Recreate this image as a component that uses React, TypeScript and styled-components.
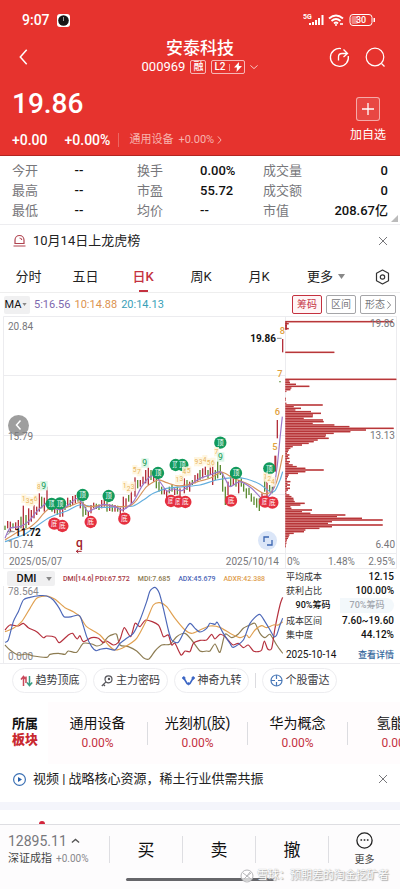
import React from "react";
import styled, { createGlobalStyle } from "styled-components";

const RED = "#e6332e";
const CRIMSON = "#c4313f";
const PAGE_W = 400;

const GlobalStyle = createGlobalStyle`
  * { box-sizing: border-box; }
  body {
    margin: 0;
    background: #fff;
    color: #111;
    font-family: Roboto, "Noto Sans CJK SC", sans-serif;
    font-size: 13px;
    line-height: 20px;
    overflow-x: hidden;
  }
  button, select { font: inherit; color: inherit; border: 0; background: none; padding: 0; margin: 0; }
  a { color: inherit; text-decoration: none; }
  h1, dl, dd, dt, p { margin: 0; font-weight: inherit; }
  svg { display: block; flex: none; }
`;

const Page = styled.main`
  display: flex;
  flex-direction: column;
  min-height: 100vh;
  overflow: hidden;
`;

/* ---------- header ---------- */
const Header = styled.header`
  background: ${RED};
  color: #fff;
  border-bottom: 1px solid #b32420;
`;
const StatusBar = styled.div`
  display: flex;
  justify-content: space-between;
  align-items: center;
  height: 36px;
  padding: 4px 24px 0 22px;
`;
const Clock = styled.span`
  display: flex;
  align-items: center;
  gap: 7px;
  font-size: 14px;
  font-weight: 500;
`;
const StatusIcons = styled.span`
  display: flex;
  align-items: center;
  gap: 5px;
`;
const NavBar = styled.nav`
  display: grid;
  grid-template-columns: 1fr auto 1fr;
  align-items: center;
  height: 42px;
  padding: 0 14px;
`;
const NavActions = styled.div`
  display: flex;
  justify-content: flex-end;
  gap: 15px;
`;
const IconButton = styled.button`
  display: flex;
  align-items: center;
  cursor: pointer;
`;
const BackButton = styled(IconButton)`
  padding-left: 5px;
`;
const Title = styled.div`
  display: flex;
  flex-direction: column;
  align-items: center;
  h1 { font-size: 17px; line-height: 20px; font-weight: 500; }
`;
const CodeLine = styled.div`
  display: flex;
  align-items: center;
  gap: 5px;
  font-size: 13px;
  line-height: 18px;
`;
const Tag = styled.span`
  display: flex;
  align-items: center;
  gap: 4px;
  height: 14px;
  padding: 0 2px;
  border: 1px solid rgba(255, 255, 255, 0.65);
  border-radius: 2px;
  font-size: 10px;
  line-height: 12px;
  font-weight: 500;
`;
const TagRule = styled.i`
  width: 1px;
  height: 7px;
  background: rgba(255, 255, 255, 0.5);
`;
const PriceBlock = styled.div`
  display: flex;
  justify-content: space-between;
  padding: 10px 14px 0 12px;
  height: 77px;
`;
const Price = styled.div`
  font-size: 28px;
  line-height: 32px;
  font-weight: 500;
`;
const ChangeLine = styled.div`
  display: flex;
  align-items: center;
  margin-top: 10px;
  font-size: 14px;
  font-weight: 500;
  gap: 17px;
`;
const SectorLink = styled.a`
  display: flex;
  align-items: center;
  gap: 5px;
  height: 14px;
  margin-left: -9px;
  padding-left: 10px;
  border-left: 1px solid rgba(255, 255, 255, 0.25);
  color: #f7b3ae;
  font-size: 11px;
  font-weight: 400;
  svg { margin-left: -2px; }
`;
const AddWatch = styled.button`
  display: flex;
  flex-direction: column;
  align-items: center;
  align-self: flex-start;
  gap: 4px;
  margin-top: 9px;
  font-size: 12px;
  line-height: 20px;
`;
const AddBox = styled.span`
  display: flex;
  align-items: center;
  justify-content: center;
  width: 24px;
  height: 24px;
  border: 1px solid rgba(255, 255, 255, 0.55);
  border-radius: 3px;
  background: rgba(255, 255, 255, 0.1);
`;

/* ---------- quotes ---------- */
const Quotes = styled.dl`
  position: relative;
  display: grid;
  grid-template-columns: 125fr 126fr 125fr;
  padding: 5px 12px 3px;
  border-bottom: 1px solid #ededf0;
`;
const Quote = styled.div<{ $end?: boolean }>`
  display: flex;
  justify-content: ${(p) => (p.$end ? "space-between" : "flex-start")};
  line-height: 20px;
  dt { width: ${(p) => (p.$end ? "auto" : "50%")}; color: #77777b; }
  dd { font-weight: 500; }
`;
const Corner = styled.i`
  position: absolute;
  right: 2px;
  bottom: 2px;
  border-left: 7px solid transparent;
  border-bottom: 7px solid #bbb;
`;
const Notice = styled.div<{ $h: number; $bottom?: number }>`
  display: flex;
  align-items: center;
  gap: 7px;
  height: ${(p) => p.$h}px;
  padding: 0 12px ${(p) => p.$bottom ?? 0}px 13px;
  color: #222;
  button { margin-left: auto; }
`;

/* ---------- tabs ---------- */
const Tabs = styled.nav`
  display: grid;
  grid-template-columns: 57fr 57fr 58fr 58fr 58fr 76fr 36fr;
  height: 37px;
  border-bottom: 1px solid #eee;
`;
const Tab = styled.button<{ $active?: boolean }>`
  display: flex;
  align-items: center;
  justify-content: center;
  gap: 5px;
  padding-top: 5px;
  font-size: 13px;
  color: ${(p) => (p.$active ? CRIMSON : "#222")};
  font-weight: ${(p) => (p.$active ? 500 : 400)};
  background: linear-gradient(${CRIMSON}, ${CRIMSON}) no-repeat center bottom / ${(p) => (p.$active ? "9px 2px" : "0 0")};
`;
const MaRow = styled.div`
  display: flex;
  align-items: center;
  gap: 4px;
  height: 23px;
  padding: 0 4px;
  font-size: 11px;
`;
const Picker = styled.div<{ $w: number; $h: number }>`
  display: flex;
  align-items: center;
  width: ${(p) => p.$w}px;
  height: ${(p) => p.$h}px;
  padding-right: 3px;
  background: #f0f0f1;
  border-radius: 2px;
  select {
    appearance: none;
    flex: 1;
    min-width: 0;
    font-size: 11px;
    line-height: 14px;
    text-align: center;
    text-align-last: center;
  }
`;
const Colored = styled.span<{ $c: string }>`
  color: ${(p) => p.$c};
  white-space: nowrap;
`;
const MaButtons = styled.div`
  display: flex;
  gap: 4px;
  margin-left: auto;
`;
const MaButton = styled.button<{ $active?: boolean }>`
  display: flex;
  align-items: center;
  gap: 2px;
  height: 19px;
  padding: 0 4px;
  border: 1px solid ${(p) => (p.$active ? CRIMSON : "#a5a5a8")};
  border-radius: 2px;
  color: ${(p) => (p.$active ? CRIMSON : "#77777b")};
  background: ${(p) => (p.$active ? "#fff5f6" : "#fff")};
  font-size: 10px;
  line-height: 16px;
`;

/* ---------- charts ---------- */
const ChartArea = styled.section`
  position: relative;
  svg.plot { width: 100%; height: auto; }
`;
const FloatButton = styled.button<{ $x: number; $y: number; $d: number; $bg: string }>`
  position: absolute;
  left: ${(p) => p.$x}%;
  top: ${(p) => p.$y}%;
  width: ${(p) => p.$d}px;
  height: ${(p) => p.$d}px;
  display: flex;
  align-items: center;
  justify-content: center;
  border-radius: 50%;
  background: ${(p) => p.$bg};
`;
const Indicator = styled.section`
  display: grid;
  grid-template-columns: 284fr 116fr;
  border-bottom: 1px solid #ececef;
`;
const DmiPanel = styled.div`
  svg.plot { width: 100%; height: auto; }
`;
const DmiHead = styled.div`
  display: flex;
  align-items: center;
  gap: 8px;
  padding: 2px 0 0 7px;
  height: 17px;
  font-size: 7px;
  line-height: 10px;
  font-weight: 500;
`;
const Stats = styled.div`
  display: flex;
  flex-direction: column;
  padding: 1px 6px 0 2px;
  font-size: 10px;
`;
const StatRow = styled.div<{ $top?: number }>`
  display: flex;
  justify-content: space-between;
  align-items: center;
  height: 14px;
  margin-top: ${(p) => p.$top ?? 0}px;
  line-height: 14px;
  small { font-size: 9px; color: #333; }
  b { font-weight: 500; }
  a { color: #35679c; font-size: 9px; font-weight: 500; }
`;
const Segments = styled.div`
  display: grid;
  grid-template-columns: 1fr 1fr;
  height: 15px;
  button { line-height: 15px; font-size: 9px; font-weight: 500; }
  button + button { color: #a3a7ae; background: #f3f8fb; border-radius: 0 8px 8px 0; }
`;

/* ---------- tools & sectors ---------- */
const Tools = styled.div`
  display: flex;
  align-items: center;
  gap: 6px;
  height: 33px;
  padding: 0 12px;
`;
const Pill = styled.button`
  display: flex;
  align-items: center;
  justify-content: center;
  gap: 3px;
  width: 75px;
  height: 25px;
  border: 1px solid #ededf0;
  border-radius: 13px;
  color: #3b3b3f;
  font-size: 11px;
  white-space: nowrap;
`;
const Rule = styled.i<{ $h: number }>`
  width: 1px;
  height: ${(p) => p.$h}px;
  background: #dcdce0;
`;
const Sectors = styled.section`
  display: flex;
  height: 62px;
  margin-top: 5px;
  overflow: hidden;
`;
const SectorLabel = styled.div`
  flex: none;
  width: 48px;
  padding: 14px 0 0 12px;
  font-size: 13px;
  line-height: 16px;
  font-weight: 700;
  b { display: block; color: #c92a30; }
`;
const SectorTile = styled.a`
  display: flex;
  align-items: center;
  flex: none;
  width: 100px;
  background: #fffcfd;
  white-space: nowrap;
`;
const TileText = styled.span`
  flex: 1;
  display: flex;
  flex-direction: column;
  align-items: center;
  font-size: 14px;
  line-height: 20px;
  span { color: ${CRIMSON}; font-size: 12px; }
`;
const Band = styled.div`
  height: 8px;
  background: #f4f5fb;
`;
const Peek = styled.div`
  height: 14px;
  margin-top: auto;
  padding-left: 39px;
  overflow: hidden;
  i { display: block; width: 6px; height: 6px; margin-top: 11px; border-radius: 50%; background: #d3253c; }
`;

/* ---------- bottom ---------- */
const Footer = styled.footer`
  position: relative;
  border-top: 1px solid #dedee2;
  background: #fdfcfd;
  height: 65px;
`;
const TradeBar = styled.div`
  display: grid;
  grid-template-columns: 109fr 73fr 73fr 73fr 72fr;
  align-items: center;
  height: 49px;
`;
const IndexBox = styled.button`
  padding: 0 0 0 8px;
  text-align: left;
  color: #77777b;
  font-size: 14px;
  line-height: 18px;
  span { display: flex; align-items: center; gap: 4px; }
  span + span { font-size: 11px; color: #444; line-height: 17px; }
  small { font-size: 10px; color: #88888c; }
`;
const TradeButton = styled.button`
  height: 27px;
  border-left: 1px solid #dedee2;
  font-size: 17px;
  line-height: 26px;
`;
const MoreButton = styled.button`
  display: flex;
  align-items: center;
  height: 27px;
  border-left: 1px solid #dedee2;
  justify-content: center;
  font-size: 10px;
  line-height: 16px;
  color: #444;
  span { display: flex; flex-direction: column; align-items: center; gap: 3px; }
`;
const HomeBar = styled.div`
  width: 37%;
  height: 3px;
  margin: 4px auto 0;
  border-radius: 2px;
  background: #66666a;
`;
const Watermark = styled.div`
  position: absolute;
  right: 11px;
  bottom: 4px;
  display: flex;
  align-items: center;
  gap: 3px;
  color: #fff;
  font-size: 11px;
  line-height: 18px;
  text-shadow: 0 0 1px #999, 1px 1px 1px #aaa;
`;

/* ---------- icons ---------- */
type ChevronProps = { dir: "left" | "right" | "up" | "down"; w: number; h: number; color: string; sw?: number };
const chevronPaths = {
  left: "M9 1 1 10l8 9",
  right: "M1 1l8 9-8 9",
  up: "M1 9l9-8 9 8",
  down: "M1 1l9 8 9-8",
};
const Chevron = ({ dir, w, h, color, sw = 1 }: ChevronProps) => (
  <svg width={w} height={h} viewBox={dir === "left" || dir === "right" ? "0 0 10 20" : "0 0 20 10"} overflow="visible">
    <path d={chevronPaths[dir]} fill="none" stroke={color} strokeWidth={sw} vectorEffect="non-scaling-stroke" />
  </svg>
);
const Caret = ({ s = 7 }: { s?: number }) => (
  <svg width={s} height={s - 2} viewBox="0 0 7 5"><path d="M0 0h7L3.5 5z" fill="#888" /></svg>
);
const CloseIcon = () => (
  <svg width="10" height="10" viewBox="0 0 10 10"><path d="M1 1l8 8M9 1l-8 8" stroke="#77777b" fill="none" /></svg>
);
const PhoneStatus = () => (
  <svg width="73" height="14" viewBox="0 0 73 14" fill="#fff">
    <text x="0" y="6" fontSize="7" fontWeight="700">5G</text>
    <path d="M6 10h2v2H6zM9 9h2v3H9zM12 7h2v5h-2zM15 5h2v7h-2zM18.500 2h2v10h-2z" />
    <g fill="none" stroke="#fff" strokeWidth="1.800">
      <path d="M26 5.500q7-6 14 0M28.500 8q4.500-4 9 0M31 10.500q2-2 4 0" />
    </g>
    <circle cx="33" cy="12" r="1" /><path d="M37 10h3v2h-3z" opacity=".8" />
    <rect x="47" y="1.500" width="22" height="11" rx="3" fill="none" stroke="#fff" />
    <rect x="48.500" y="3" width="6.500" height="8" rx="1.500" opacity=".4" />
    <path d="M70.500 5h1.500v4h-1.500z" />
    <text x="58" y="10" fontSize="9" fontWeight="500" textAnchor="middle">30</text>
  </svg>
);

/* ---------- chart data, in thirds of a pixel ---------- */
const candles =
  "15,632,645,g 23,618,640,r 31,620,650,r 39,625,640,g 47,622,645,r 55,615,640,r 63,605,640,g 70,572,645,r 78,600,640,g 86,580,630,r 94,585,620,r 102,570,610,r 110,575,600,r 118,535,590,r 125,545,580,g 133,548,590,r 141,515,570,r 149,560,585,g 156,570,590,g 164,570,595,r 172,575,600,g 180,580,606,r 188,575,605,r 195,560,585,g 203,548,575,r 211,555,575,g 218,543,570,r 226,540,565,r 234,530,560,g 241,548,580,r 249,560,605,g 257,575,600,g 265,590,605,r 273,570,595,r 281,563,580,r 289,566,582,g 297,568,585,g 305,555,580,r 313,545,575,r 321,560,590,g 329,568,588,r 337,568,590,g 345,570,590,r 353,572,590,g 361,578,600,r 370,545,590,r 378,550,580,r 386,540,560,g 394,530,568,r 405,487,545,r 413,495,520,g 421,495,515,r 429,485,508,r 437,465,505,r 445,458,510,r 453,465,495,g 461,480,500,r 469,490,520,g 477,500,530,g 485,515,538,g 493,520,538,r 500,525,550,r 508,515,535,g 516,510,530,g 524,520,540,r 532,515,538,g 540,520,545,r 553,490,535,r 561,495,525,g 569,500,530,r 577,495,510,g 585,480,505,r 593,475,500,r 600,465,495,g 608,460,490,r 616,455,480,r 624,465,490,g 631,450,480,r 638,450,510,r 646,465,495,g 653,435,490,g 661,450,480,g 668,475,530,g 676,515,570,g 684,500,540,r 692,470,515,g 700,485,510,r 708,490,515,g 716,495,535,r 724,490,515,g 731,505,530,g 739,520,550,g 747,518,540,g 754,535,560,g 762,545,570,g 770,550,578,g 778,550,588,g 786,535,570,r 794,485,530,g 801,500,545,r 809,510,530,g 817,515,535,g 825,422,470,r 832,315,370,r 840,198,202,g 848,72,112,r"
    .split(" ")
    .map((row) => row.split(","))
    .map(([x, top, bottom, c]) => ({ x: +x, top: +top, bottom: +bottom, up: c === "r" }));

const ma5 = "15,670 30,640 60,635 85,620 110,590 140,565 160,580 185,583 205,570 235,550 262,588 280,583 310,568 345,575 368,585 400,560 425,515 450,485 470,487 500,528 520,522 545,527 570,510 600,490 630,480 660,470 675,490 690,515 720,500 755,520 785,550 805,545 822,515 832,450 840,370 847,305";
const ma10 = "15,675 55,650 85,640 110,620 145,583 200,577 240,562 265,575 310,570 350,575 390,572 410,555 440,515 475,495 500,503 530,512 560,510 600,498 630,490 660,472 675,475 700,490 720,497 750,510 790,535 815,530 830,500 840,460 848,420";
const ma20 = "15,680 70,660 100,640 150,607 200,588 240,570 300,577 360,575 400,573 430,555 460,535 500,520 550,515 600,510 650,495 700,488 740,492 780,508 810,530 825,527 840,495 848,470";

const tops = [[155, 567], [180, 565], [248, 540], [326, 543], [474, 474], [527, 450], [547, 450], [661, 383], [708, 474], [808, 460]];
const bottoms = [[163, 626], [187, 633], [272, 621], [373, 611], [513, 558], [535, 560], [556, 561], [693, 557], [795, 560], [817, 563]];
const nines = [[131, 512], [434, 444], [661, 426]];
const counts: [number, number, string][] = [
  [71, 550, "1"], [83, 558, "3"], [95, 560, "5"], [107, 552, "6"], [117, 515, "8"],
  [374, 512, "1"], [386, 520, "2"], [398, 514, "3"], [404, 464, "5"], [417, 470, "7"],
  [532, 494, "1"], [544, 492, "3"], [553, 470, "4"], [566, 468, "5"], [589, 440, "9"],
  [602, 440, "3"], [614, 434, "4"], [626, 444, "5"], [639, 442, "6"], [649, 410, "7"],
  [796, 486, "1"], [808, 490, "2"], [819, 500, "4"],
];
const runUp: [number, number, string][] = [[825, 395, "5"], [832, 290, "6"], [840, 175, "7"], [847, 47, "8"]];

const chips =
  "20,322 26,10 31,5 36,5 41,10 112,147 193,333 198,12 203,14 208,32 214,72 219,18 224,15 229,3 250,2 255,2 265,3 270,112 275,25 280,47 285,30 290,77 295,107 300,83 305,82 310,55 315,113 320,115 325,82 330,147 335,192 340,325 345,242 350,195 355,145 360,122 365,120 370,130 375,97 380,85 385,70 390,50 395,22 400,15 405,10 410,8 415,5 420,12 425,8 430,12 435,5 440,14 445,10 450,22 455,34 460,60 465,115 470,60 475,38 480,10 485,8 490,5 495,4 500,15 505,6 510,14 515,5 520,14 525,8 530,3 535,3 540,12 545,18 550,24 555,25 560,28 565,58 570,45 575,15 580,18 585,80 590,50 595,75 600,180 605,155 610,230 615,292 620,140 625,128 630,292 635,140 640,102 645,60 650,56 655,25 660,12 665,10 670,8 675,5 680,3 685,3 690,2 695,2"
    .split(" ")
    .map((row) => row.split(",").map(Number));

const dmiLines = [
  { color: "#8d7c52", points: "15,240 30,255 55,270 80,267 100,273 140,277 150,268 175,265 195,268 205,258 230,262 250,235 275,237 290,243 305,238 325,215 340,208 350,208 360,240 385,245 410,258 430,278 447,282 465,258 485,240 510,238 530,215 555,205 575,225 600,258 620,258 630,258 645,237 660,262 675,208 695,218 715,207 730,190 750,180 765,175 780,205 795,218 810,208 830,240 848,265" },
  { color: "#b5303d", points: "15,195 30,180 55,183 70,175 85,188 110,200 130,218 140,213 165,217 178,233 205,210 218,205 225,215 232,222 240,212 250,230 275,218 295,220 310,233 320,228 340,240 355,232 362,218 373,188 392,215 405,175 420,185 438,165 475,180 490,215 505,210 515,240 525,235 543,270 555,258 570,260 580,235 600,226 620,225 635,208 645,222 660,208 675,215 690,232 700,240 715,235 730,248 745,240 760,258 775,260 785,255 793,228 803,252 815,250 825,190 840,120 848,97" },
  { color: "#e0a050", points: "15,200 40,190 65,170 90,130 110,100 140,93 165,103 195,128 220,140 240,155 260,185 300,210 325,240 345,255 375,245 410,220 440,165 460,120 480,113 500,125 525,160 555,195 575,205 600,195 630,183 660,187 690,205 720,218 740,210 748,218 765,195 785,182 800,188 820,180 835,180 848,170" },
  { color: "#4c67b8", points: "15,232 25,225 40,170 55,140 70,105 90,97 120,92 140,93 160,105 178,130 192,155 215,155 235,150 243,160 260,215 275,245 288,257 300,253 320,250 345,255 360,235 380,220 400,205 420,165 440,110 450,78 465,67 478,85 490,130 505,195 515,225 535,232 555,195 570,175 585,190 600,201 620,190 630,175 645,178 652,172 670,205 690,235 700,247 730,225 750,175 778,148 795,170 810,195 822,215 830,210 840,180 848,160" },
];

/* Draws a smooth curve through a list of points. */
const smooth = (list: string) => {
  const p = list.split(" ").map((s) => s.split(",").map(Number));
  let d = `M${p[0][0]} ${p[0][1]}`;
  for (let i = 0; i < p.length - 1; i++) {
    const a = p[Math.max(0, i - 1)], b = p[i], c = p[i + 1], e = p[Math.min(p.length - 1, i + 2)];
    d += `C${b[0] + (c[0] - a[0]) / 8} ${b[1] + (c[1] - a[1]) / 8} ${c[0] - (e[0] - b[0]) / 8} ${c[1] - (e[1] - b[1]) / 8} ${c[0]} ${c[1]}`;
  }
  return d;
};

const Marks = ({ at, label, color }: { at: number[][]; label: string; color: string }) => (
  <g textAnchor="middle" fontSize="20" fill="#fff">
    {at.map(([x, y]) => (
      <g key={x}>
        <circle cx={x} cy={y} r="18.500" fill={color} />
        <text x={x} y={y + 7}>{label}</text>
      </g>
    ))}
  </g>
);

const PriceChart = () => (
  <svg className="plot" viewBox={`0 316 ${PAGE_W} 253`} role="img" aria-label="日K">
    <g fill="none" stroke="#ececef">
      <path d="M3.500 316.500H396.500V568.500H3.500zM3.500 375.500H285.500M3.500 435.500H285.500M3.500 494.500H285.500M3.500 553.500H396.500M285.500 316.500V568.500" />
    </g>
    <g transform="translate(0 315) scale(.33333)">
      {chips.map(([y, w]) => (
        <g key={y}>
          <rect x="856" y={y - 2.5} width={w} height="5" fill="#d97b7b" />
          <rect x="856" y={y - 1.5} width={w} height="3" fill="#b02a2e" />
        </g>
      ))}
      <path d="M858 20v25" stroke="#b02a2e" strokeWidth="4" />
      {candles.map((c) => (
        <rect key={c.x} x={c.x - 2} y={c.top} width={c.x === 825 ? 6 : 4} height={c.bottom - c.top} fill={c.up ? "#b3303c" : "#5d8c34"} />
      ))}
      <g fill="none" strokeWidth="3.500">
        <path d={smooth(ma20)} stroke="#63aede" />
        <path d={smooth(ma10)} stroke="#d6945c" />
        <path d={smooth(ma5)} stroke="#9b77c9" />
      </g>
      <Marks at={tops} label="顶" color="#129a5c" />
      <g textAnchor="middle" fontSize="20">
        {counts.map(([x, y, t]) => (
          <g key={x}>
            <rect x={x - 7} y={y - 14} width="15" height="28" fill="#fff4dc" opacity=".85" />
            <text x={x} y={y + 7} fill="#e8b45c">{t}</text>
          </g>
        ))}
      </g>
      <g textAnchor="middle" fontSize="26">
        {nines.map(([x, y]) => (
          <g key={x}>
            <rect x={x - 10} y={y - 14} width="22" height="28" fill="#ddf6e8" />
            <text x={x} y={y + 9} fill="#149a56">9</text>
          </g>
        ))}
        {runUp.map(([x, y, t]) => (
          <text key={x} x={x} y={y + 10} fontSize="28" fontWeight="500" fill="#e0a03c">{t}</text>
        ))}
      </g>
      <Marks at={bottoms} label="底" color="#e5303f" />
      <path d="M229 709h16M235 704l-6 5 6 5" stroke="#a01a28" strokeWidth="3" fill="none" />
      <path d="M22 650h22M22 660l14-14M831 70h14" stroke="#777" strokeWidth="2.500" fill="none" />
    </g>
    <g fontSize="10" fill="#77777b">
      <text x="8" y="330">20.84</text>
      <text x="8" y="440">15.79</text>
      <text x="8" y="548">10.74</text>
      <text x="9" y="565">2025/05/07</text>
      <text x="279" y="565" textAnchor="end">2025/10/14</text>
      <text x="287" y="565">0%</text>
      <text x="328" y="565">1.48%</text>
      <text x="395" y="565" textAnchor="end">2.95%</text>
      <text x="395" y="327" textAnchor="end">19.86</text>
      <text x="395" y="439" textAnchor="end">13.13</text>
      <text x="395" y="548" textAnchor="end">6.40</text>
    </g>
    <g fontSize="10" fontWeight="700" fill="#111">
      <text x="15" y="536">11.72</text>
      <text x="276" y="342" textAnchor="end">19.86</text>
    </g>
    <text x="76" y="547" fontSize="12" fontWeight="500" fill="#a01a28">q</text>
  </svg>
);

const sectors = ["通用设备", "光刻机(胶)", "华为概念", "氢能源"];

export default function App() {
  return (
    <Page>
      <GlobalStyle />
      <Header>
        <StatusBar>
          <Clock>
            9:07
            <svg width="13" height="13" viewBox="0 0 13 13">
              <rect width="13" height="13" rx="3" fill="#fff" />
              <circle cx="6.500" cy="6.500" r="5.300" fill="#161616" />
              <path d="M6.500 3v4" stroke="#999" />
            </svg>
          </Clock>
          <StatusIcons><PhoneStatus /></StatusIcons>
        </StatusBar>
        <NavBar>
          <BackButton aria-label="返回"><Chevron dir="left" w={9} h={16} color="#fff" sw={1.5} /></BackButton>
          <Title>
            <h1>安泰科技</h1>
            <CodeLine>
              000969
              <Tag>融</Tag>
              <Tag>
                L2
                <TagRule />
                <svg width="8" height="10" viewBox="0 0 8 10"><path d="M5 0 0 5.500h3L2.500 10 8 4H4.800z" fill="#fff" /></svg>
              </Tag>
              <Chevron dir="down" w={8} h={4} color="#f9c5c2" />
            </CodeLine>
          </Title>
          <NavActions>
            <IconButton aria-label="分享">
              <svg width="21" height="21" viewBox="0 0 21 21" fill="none" stroke="#fff" strokeWidth="1.300">
                <path d="M12 1.600A9 9 0 1 0 19.300 9" />
                <path d="M9.500 13.500V10q0-3.500 3.500-3.500h4.500M14.500 2.500l4 4-4 3.500" />
              </svg>
            </IconButton>
            <IconButton aria-label="搜索">
              <svg width="21" height="21" viewBox="0 0 21 21" fill="none" stroke="#fff" strokeWidth="1.200">
                <circle cx="10" cy="10" r="8.800" /><path d="M16.500 16.500l3 3" />
              </svg>
            </IconButton>
          </NavActions>
        </NavBar>
        <PriceBlock>
          <div>
            <Price>19.86</Price>
            <ChangeLine>
              <span>+0.00</span>
              <span>+0.00%</span>
              <SectorLink href="#sector">通用设备 <span>+0.00%</span> <Chevron dir="right" w={5} h={8} color="#f7b3ae" /></SectorLink>
            </ChangeLine>
          </div>
          <AddWatch>
            <AddBox>
              <svg width="12" height="12" viewBox="0 0 12 12"><path d="M6 0v12M0 6h12" stroke="#fff" strokeWidth="1.300" /></svg>
            </AddBox>
            加自选
          </AddWatch>
        </PriceBlock>
      </Header>

      <Quotes>
        <Quote><dt>今开</dt><dd>--</dd></Quote>
        <Quote><dt>换手</dt><dd>0.00%</dd></Quote>
        <Quote $end><dt>成交量</dt><dd>0</dd></Quote>
        <Quote><dt>最高</dt><dd>--</dd></Quote>
        <Quote><dt>市盈</dt><dd>55.72</dd></Quote>
        <Quote $end><dt>成交额</dt><dd>0</dd></Quote>
        <Quote><dt>最低</dt><dd>--</dd></Quote>
        <Quote><dt>均价</dt><dd>--</dd></Quote>
        <Quote $end><dt>市值</dt><dd>208.67亿</dd></Quote>
        <Corner />
      </Quotes>

      <Notice $h={31}>
        <svg width="13" height="13" viewBox="0 0 13 13" fill="none" stroke="#b04450" strokeWidth="1.200">
          <path d="M2 9.500V6a4.500 4.500 0 0 1 9 0v3.500zM.500 12h12M6.500 4q2 0 2.300 2" />
        </svg>
        10月14日上龙虎榜
        <IconButton aria-label="关闭"><CloseIcon /></IconButton>
      </Notice>

      <Tabs>
        <Tab>分时</Tab>
        <Tab>五日</Tab>
        <Tab $active>日K</Tab>
        <Tab>周K</Tab>
        <Tab>月K</Tab>
        <Tab>更多 <Caret /></Tab>
        <Tab aria-label="设置">
          <svg width="15" height="16" viewBox="0 0 15 16" fill="none" stroke="#333" strokeWidth="1.200">
            <path d="M7.500 1l6 3.300v7.400l-6 3.300-6-3.300V4.300z" strokeLinejoin="round" /><circle cx="7.500" cy="8" r="2.200" />
          </svg>
        </Tab>
      </Tabs>
      <MaRow>
        <Picker $w={26} $h={18}>
          <select aria-label="均线"><option>MA</option></select>
          <Caret s={5} />
        </Picker>
        <Colored $c="#7d68ae">5:16.56</Colored>
        <Colored $c="#dc9350">10:14.88</Colored>
        <Colored $c="#3a9fb8">20:14.13</Colored>
        <MaButtons>
          <MaButton $active>筹码</MaButton>
          <MaButton>区间</MaButton>
          <MaButton>形态 <Chevron dir="right" w={4} h={8} color="#88888c" /></MaButton>
        </MaButtons>
      </MaRow>

      <ChartArea>
        <PriceChart />
        <FloatButton $x={2} $y={39} $d={21} $bg="rgba(125,125,125,.75)" aria-label="向左">
          <Chevron dir="left" w={5} h={10} color="#fff" sw={1.5} />
        </FloatButton>
        <FloatButton $x={64.5} $y={85} $d={19} $bg="#dbe6f8" aria-label="全屏">
          <svg width="10" height="10" viewBox="0 0 10 10" fill="none" stroke="#3b66b0" strokeWidth="1.300">
            <path d="M6 1H1v5M4 9h5V4" />
          </svg>
        </FloatButton>
      </ChartArea>

      <Indicator>
        <DmiPanel>
          <DmiHead>
            <Picker $w={48} $h={15}>
              <select aria-label="指标"><option>DMI</option></select>
              <Caret s={6} />
            </Picker>
            <Colored $c="#a83845">DMI[14.6] PDI:67.572</Colored>
            <Colored $c="#8d7c52">MDI:7.685</Colored>
            <Colored $c="#4c67b8">ADX:45.679</Colored>
            <Colored $c="#e0a050">ADXR:42.388</Colored>
          </DmiHead>
          <svg className="plot" viewBox="0 586 284 77" role="img" aria-label="DMI">
            <path d="M3.500 586V663" stroke="#ececef" />
            <g fontSize="10" fill="#88888c"><text x="8" y="595">78.564</text><text x="8" y="660">0.000</text></g>
            <g transform="translate(0 565) scale(.33333)" fill="none" strokeWidth="3.500">
              {dmiLines.map((l) => <path key={l.color} d={smooth(l.points)} stroke={l.color} />)}
            </g>
          </svg>
        </DmiPanel>
        <Stats>
          <StatRow><small>平均成本</small><b>12.15</b></StatRow>
          <StatRow><small>获利占比</small><b>100.00%</b></StatRow>
          <Segments><button>90%筹码</button><button>70%筹码</button></Segments>
          <StatRow $top={1}><small>成本区间</small><b>7.60~19.60</b></StatRow>
          <StatRow><small>集中度</small><b>44.12%</b></StatRow>
          <StatRow $top={6}><span>2025-10-14</span><a href="#detail">查看详情</a></StatRow>
        </Stats>
      </Indicator>

      <Tools>
        <Pill>
          <svg width="13" height="12" viewBox="0 0 13 12" fill="none" strokeWidth="1.500">
            <path d="M3.500 11V1.500M1 4.500l2.500-3 2 2.500M6 1.500V8" stroke="#c9485a" />
            <path d="M9.500 1v9.500M7 7.500l2.500 3 2.700-3" stroke="#3a9c82" />
          </svg>
          趋势顶底
        </Pill>
        <Pill>
          <svg width="12" height="12" viewBox="0 0 12 12" fill="none" stroke="#55555a" strokeWidth="1.200">
            <circle cx="7.500" cy="4.300" r="3.500" /><path d="M5 6.800.800 11M2.500 9.500l1.500 1.500" /><circle cx="8" cy="4" r=".600" />
          </svg>
          主力密码
        </Pill>
        <Pill>
          <svg width="13" height="10" viewBox="0 0 13 10" stroke="#3c66c4" fill="#3c66c4">
            <path d="M1.800 2 5 7.500h3L11.200 2" fill="none" strokeWidth="1.600" />
            <circle cx="1.800" cy="2" r="1.200" /><circle cx="11.200" cy="2" r="1.200" /><circle cx="6.500" cy="7.800" r="1" />
          </svg>
          神奇九转
        </Pill>
        <Rule $h={15} />
        <Pill>
          <svg width="13" height="13" viewBox="0 0 13 13" fill="none" stroke="#4a79b8" strokeWidth="1.200">
            <circle cx="6.500" cy="6.500" r="5.500" /><path d="M6.500 1v4M6.500 8v4M1 6.500h4M8 6.500h4" />
          </svg>
          个股雷达
        </Pill>
      </Tools>

      <Sectors id="sector">
        <SectorLabel>所属<b>板块</b></SectorLabel>
        {sectors.map((name) => (
          <SectorTile key={name} href="#sector">
            <TileText>{name}<span>0.00%</span></TileText>
            <Rule $h={23} />
          </SectorTile>
        ))}
      </Sectors>

      <Notice $h={38} $bottom={8}>
        <svg width="13" height="13" viewBox="0 0 13 13">
          <circle cx="6.500" cy="6.500" r="5.900" fill="none" stroke="#3b70b4" strokeWidth="1.200" />
          <path d="M5 4l4 2.500L5 9z" fill="#2660ac" />
        </svg>
        视频 | 战略核心资源，稀土行业供需共振
        <IconButton aria-label="关闭"><CloseIcon /></IconButton>
      </Notice>
      <Band />
      <Peek><i /></Peek>

      <Footer>
        <TradeBar>
          <IndexBox>
            <span>12895.11 <Chevron dir="up" w={9} h={4} color="#555" sw={1.3} /></span>
            <span>深证成指 <small>+0.00%</small></span>
          </IndexBox>
          <TradeButton>买</TradeButton>
          <TradeButton>卖</TradeButton>
          <TradeButton>撤</TradeButton>
          <MoreButton>
            <span>
              <svg width="17" height="17" viewBox="0 0 17 17">
                <circle cx="8.500" cy="8.500" r="7.600" fill="none" stroke="#222" strokeWidth="1.300" />
                <path d="M4.500 8h1.600M7.700 8h1.600M10.900 8h1.600" stroke="#222" strokeWidth="1.500" />
              </svg>
              更多
            </span>
          </MoreButton>
        </TradeBar>
        <HomeBar />
        <Watermark>
          <svg width="14" height="14" viewBox="0 0 14 14" fill="none" stroke="#b5b5b8">
            <circle cx="7" cy="7" r="6" fill="#fff" fillOpacity=".7" /><path d="M3 4l4 3-3 3M11 4 7 7l4 3M7 7l3-4" />
          </svg>
          雪球：预期差的淘金挖矿者
        </Watermark>
      </Footer>
    </Page>
  );
}
